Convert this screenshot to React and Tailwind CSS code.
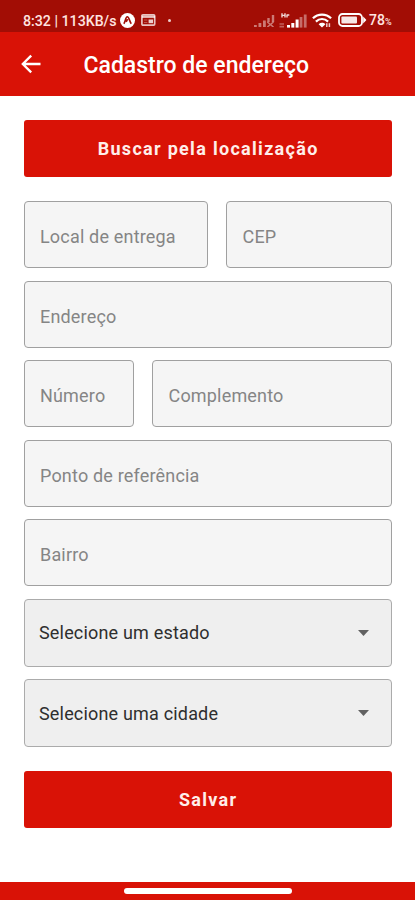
import clsx from "clsx";

function SignalOff() {
  return (
    <svg width="21" height="13" viewBox="0 0 21 13" className="text-white/45" fill="currentColor">
      <rect x="0" y="11" width="2.8" height="2" />
      <rect x="4.5" y="9" width="2.8" height="4" />
      <rect x="9" y="6.5" width="2.8" height="6.5" />
      <rect x="13.3" y="4" width="2.4" height="4" />
      <rect x="17.8" y="1" width="2.4" height="7" />
      <path d="M13.3 8l6.2 5M19.5 8l-6.2 5" stroke="currentColor" strokeWidth="1.6" />
    </svg>
  );
}

function SignalData() {
  return (
    <svg width="28" height="15" viewBox="0 0 28 15" fill="#fff">
      <path d="M3 .3v4.2M6 .3v4.2M3 2.4h3M8 1.4v3.1M8 2h2.3" stroke="#fff" strokeWidth="1.4" fill="none" opacity=".85" />
      <path d="M.5 10.2h4.5v1.6H.5zM.5 12.8h4.5v1.6H.5z" opacity=".35" />
      <rect x="8" y="12" width="3" height="2.6" />
      <rect x="12.3" y="10" width="3" height="4.6" />
      <rect x="16.6" y="6.5" width="3" height="8.1" />
      <rect x="20.6" y="4" width="2.8" height="10.6" opacity=".4" />
      <rect x="24.8" y="1.5" width="2.8" height="13.1" opacity=".4" />
    </svg>
  );
}

function Wifi() {
  return (
    <svg width="21" height="15" viewBox="0 0 21 15" fill="none" stroke="#fff" strokeWidth="2.2">
      <path d="M.9 5.3C6 .3 14 .3 19.1 5.3" />
      <path d="M3.9 8.6c3.6-3.5 8.6-3.5 12.2 0" />
      <path d="M6.6 11.2c2-1.9 4.8-1.9 6.8 0L10 14.5z" fill="#fff" stroke="none" />
      <path d="M14.8 10.2v3.9M17.4 10.2v3.9" strokeWidth="1.5" opacity=".8" />
    </svg>
  );
}

function Battery() {
  return (
    <svg width="29" height="14" viewBox="0 0 29 14" fill="none">
      <rect x="1" y="1" width="23" height="12" rx="3.5" stroke="#fff" strokeWidth="1.8" />
      <rect x="3.4" y="3.4" width="15.6" height="7.2" rx="1" fill="#fff" fillOpacity=".9" />
      <path d="M25.2 3.6L28.4 7l-3.2 3.4z" fill="#fff" />
    </svg>
  );
}

function StatusBar() {
  return (
    <div className="flex h-8 shrink-0 items-center bg-[#a20d05] pt-2 pl-[23px] text-[14.2px] leading-4 font-medium text-[#ffe4e0]">
      <span className="w-[97px] pt-0.5 whitespace-nowrap">8:32 | 113KB/s</span>
      <svg width="15" height="15" viewBox="0 0 15 15">
        <circle cx="7.5" cy="7.5" r="7.5" fill="#fff" />
        <path d="M3.8 10.8C5.2 9.2 5.6 3.8 7.3 3.8c1.8 0 2.4 5.2 4 7M6.2 8.8l1.4-2.6" stroke="#a20d05" strokeWidth="1.6" fill="none" />
      </svg>
      <svg width="15" height="12" viewBox="0 0 15 12" className="ml-1.5" fill="none">
        <rect x=".9" y=".9" width="12.8" height="10.2" rx="1" stroke="#fff" strokeOpacity=".75" strokeWidth="1.7" />
        <path d="M1 2.8h13" stroke="#fff" strokeOpacity=".75" strokeWidth="2.2" />
        <path d="M3 6h3.4M3 8.5h3.4" stroke="#fff" strokeOpacity=".3" />
        <rect x="7.6" y="5.5" width="4.4" height="3.7" fill="#fff" fillOpacity=".8" />
      </svg>
      <span className="ml-3 size-[3px] rounded-full bg-white/80" />
      <div className="ml-[83px] flex items-center">
        <SignalOff />
        <div className="ml-1 flex items-center gap-[5px]">
          <SignalData />
          <Wifi />
          <Battery />
        </div>
        <span className="ml-0.5 pt-0.5 text-[14px]">
          78<span className="text-[9px]">%</span>
        </span>
      </div>
    </div>
  );
}

function Header() {
  return (
    <header className="flex h-16 shrink-0 items-center bg-[#d91206] pl-[21px] text-white">
      <svg width="20" height="20" viewBox="0 0 20 20" fill="none" stroke="#fff" strokeWidth="2.3">
        <path d="M19.5 10H2M10.2 1.6L1.8 10l8.4 8.4" />
      </svg>
      <h1 className="ml-[42.5px] pt-1 text-[23px] font-medium">Cadastro de endereço</h1>
    </header>
  );
}

function Button({ children, className }) {
  return (
    <button
      className={clsx(
        "flex h-[57px] w-full items-center justify-center rounded-[3px] bg-[#d91206] pl-[1.3px] text-[18px] font-bold tracking-[1.3px] text-[#ffeeea]",
        className
      )}
    >
      {children}
    </button>
  );
}

function Field({ label, className }) {
  return (
    <input
      type="text"
      placeholder={label}
      className={clsx(
        "h-[67px] min-w-0 rounded-[4px] border border-[#a0a0a0] bg-[#f5f5f5] pt-1 pl-[15.5px] text-[18px] tracking-[0.18px] text-[#222] placeholder:text-[#858585]",
        className
      )}
    />
  );
}

function Select({ label }) {
  return (
    <button className="flex h-[68px] w-full items-center justify-between rounded-[4px] border border-[#ababab] bg-[#efefef] pr-[22px] pl-[14.5px] text-[18px] tracking-[0.18px] text-[#2e2e2e]">
      {label}
      <svg width="11" height="6" viewBox="0 0 11 6" fill="#616161">
        <path d="M0 0h11L5.5 6z" />
      </svg>
    </button>
  );
}

export default function App() {
  return (
    <div className="flex h-[900px] w-[415px] flex-col overflow-hidden bg-white font-[Roboto,sans-serif]">
      <StatusBar />
      <Header />

      <main className="flex flex-1 flex-col px-[23.5px] pt-6">
        <Button>Buscar pela localização</Button>

        <form className="mt-6 flex flex-col gap-[12.5px]">
          <div className="flex gap-[18px]">
            <Field label="Local de entrega" className="w-[184.5px]" />
            <Field label="CEP" className="flex-1" />
          </div>
          <Field label="Endereço" />
          <div className="flex gap-[18px]">
            <Field label="Número" className="w-[110.5px]" />
            <Field label="Complemento" className="flex-1" />
          </div>
          <Field label="Ponto de referência" />
          <Field label="Bairro" />
          <Select label="Selecione um estado" />
          <Select label="Selecione uma cidade" />
        </form>

        <Button className="mt-6">Salvar</Button>
      </main>

      <footer className="flex h-[18px] shrink-0 justify-center bg-[#d91206] pt-1.5">
        <span className="h-1.5 w-[168px] rounded-full bg-white" />
      </footer>
    </div>
  );
}
